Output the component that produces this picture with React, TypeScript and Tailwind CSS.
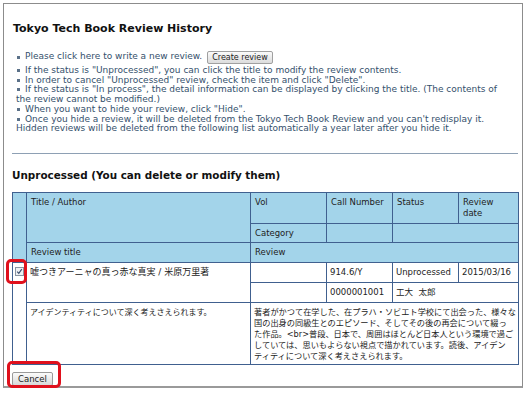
import React from "react";

const th = "border border-[#40608f] bg-[#a3d4ea] align-top px-[4px] pt-[4px] leading-[11px] text-[#222]";
const td = "border border-[#40608f] bg-white align-top px-[3px] pt-[4px] leading-[11px] text-[#222]";

const Bullet = () => (
  <span className="inline-block w-[3px] h-[3px] bg-[#5b7189] ml-[1px] mr-[5px] align-middle" />
);

const Checkbox = () => (
  <svg width="9" height="9" viewBox="0 0 9 9" className="block">
    <rect x="0.5" y="0.5" width="8" height="8" fill="#eef0f3" stroke="#8a95a3" />
    <path d="M2.2 4.6 L3.8 6.3 L6.8 2.2" fill="none" stroke="#3b4f6e" strokeWidth="1.2" />
  </svg>
);

export default function App() {
  return (
    <div className="relative w-[530px] h-[396px] bg-white overflow-hidden font-['DejaVu_Sans','Noto_Sans_CJK_JP',sans-serif]">
      <div className="ml-[3px] mt-[3px] w-[520px] h-[385px] border border-[#8c8c8c] border-b-2 border-b-[#9a9a9a] pl-[8px]">
        {/* Heading */}
        <h1 className="pt-[18px] pl-[1px] text-[11px] leading-[14px] font-bold text-[#111]">
          Tokyo Tech Book Review History
        </h1>

        {/* Notes */}
        <div className="mt-[14px] pl-[4px] text-[9px] text-[#34506c]">
          <div className="flex items-center h-[14px]">
            <Bullet />
            <span>Please click here to write a new review.</span>
            <button className="ml-[5px] h-[13px] px-[4px] text-[8px] leading-[11px] text-[#222] border border-[#a0a0a0] rounded-[2px] bg-gradient-to-b from-[#fbfbfb] to-[#dcdcdc]">
              Create review
            </button>
          </div>
          <div className="mt-[2px] leading-[9.7px] whitespace-nowrap">
            <Bullet />If the status is "Unprocessed", you can click the title to modify the review contents.<br />
            <Bullet />In order to cancel "Unprocessed" review, check the item and click "Delete".<br />
            <Bullet />If the status is "In process", the detail information can be displayed by clicking the title. (The contents of<br />
            the review cannot be modified.)<br />
            <Bullet />When you want to hide your review, click "Hide".<br />
            <Bullet />Once you hide a review, it will be deleted from the Tokyo Tech Book Review and you can't redisplay it.<br />
            Hidden reviews will be deleted from the following list automatically a year later after you hide it.
          </div>
        </div>

        <div className="mt-[19px] w-[506px] h-px bg-[#8ea0b4]" />

        <h2 className="mt-[14px] text-[10.4px] leading-[14px] font-bold text-[#111]">
          Unprocessed (You can delete or modify them)
        </h2>

        {/* Review table */}
        <table className="mt-[10px] w-[506px] table-fixed border-collapse text-[8.5px]">
          <colgroup>
            <col className="w-[14px]" />
            <col className="w-[224px]" />
            <col className="w-[76px]" />
            <col className="w-[66px]" />
            <col className="w-[66px]" />
            <col className="w-[60px]" />
          </colgroup>
          <tbody>
            <tr className="h-[31px]">
              <td rowSpan={3} className={th} />
              <td rowSpan={2} className={th}>Title / Author</td>
              <td className={th}>Vol</td>
              <td className={th}>Call Number</td>
              <td className={th}>Status</td>
              <td className={th}>Review<br />date</td>
            </tr>
            <tr className="h-[19px]">
              <td className={th}>Category</td>
              <td className={th} />
              <td colSpan={2} className={th} />
            </tr>
            <tr className="h-[20px]">
              <td className={th}>Review title</td>
              <td colSpan={4} className={th}>Review</td>
            </tr>
            <tr className="h-[20px]">
              <td rowSpan={3} className="border border-[#40608f] bg-white align-top pl-[2px] pt-[4px]">
                <Checkbox />
              </td>
              <td rowSpan={2} className={`${td} text-[9px]`}>嘘つきアーニャの真っ赤な真実 / 米原万里著</td>
              <td className={td} />
              <td className={td}>914.6/Y</td>
              <td className={td}>Unprocessed</td>
              <td className={td}>2015/03/16</td>
            </tr>
            <tr className="h-[20px]">
              <td className={td} />
              <td className={td}>0000001001</td>
              <td colSpan={2} className={td}>工大&nbsp;&nbsp;太郎</td>
            </tr>
            <tr className="h-[62px]">
              <td className={`${td} text-[8px] leading-[10px] pt-[3px] text-[#111]`}>アイデンティティについて深く考えさえられます。</td>
              <td colSpan={4} className={`${td} text-[8.2px] leading-[10px] pt-[3px] whitespace-nowrap text-[#111]`}>
                著者がかつて在学した、在プラハ・ソビエト学校にて出会った、様々な<br />
                国の出身の同級生とのエピソード、そしてその後の再会について綴っ<br />
                た作品。&lt;br&gt;普段、日本で、周囲はほとんど日本人という環境で過ご<br />
                していては、思いもよらない視点で描かれています。読後、アイデン<br />
                ティティについて深く考えさえられます。
              </td>
            </tr>
          </tbody>
        </table>

        <button className="mt-[1px] h-[14px] w-[41px] text-[8.5px] leading-[12px] text-[#222] border border-[#9a9a9a] rounded-[2px] bg-gradient-to-b from-[#fbfbfb] to-[#d8d8d8]">
          Cancel
        </button>
      </div>

      {/* Highlight marks */}
      <div className="absolute left-[6px] top-[259px] w-[21px] h-[25px] border-[3px] border-[#e0101c] rounded-[5px]" />
      <div className="absolute left-[7px] top-[361px] w-[54px] h-[27px] border-[3px] border-[#e0101c] rounded-[5px]" />
    </div>
  );
}
